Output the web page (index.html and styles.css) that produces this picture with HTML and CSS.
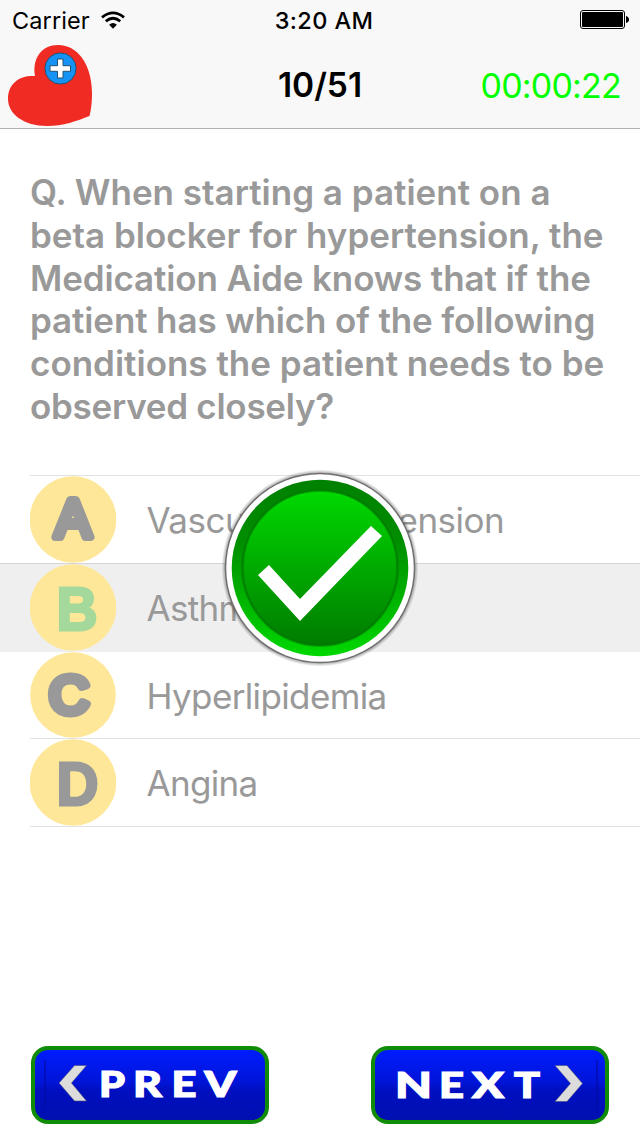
FILE: index.html
```html
<!DOCTYPE html>
<html lang="en">
<head>
<meta charset="utf-8">
<title>Quiz</title>
<link rel="stylesheet" href="styles.css">
</head>
<body>
<div class="screen">
  <header class="header">
    <div class="status">
      <div class="carrier"><span>Carrier</span>
        <svg class="wifi" viewBox="0 0 24 18" width="24" height="18"><g fill="none" stroke="#000" stroke-width="2.8"><path d="M1 6.3Q12-2.5 23 6.3"/><path d="M4.8 10.3Q12 4.2 19.2 10.3"/></g><path d="M8.1 13.7Q12 10.3 15.900 13.700L12 17.700Z"/></svg>
      </div>
      <div class="clock">3:20 AM</div>
      <svg class="battery" viewBox="0 0 50 20" width="50" height="20"><rect x=".5" y=".5" width="44" height="18" rx="2.500" fill="none" stroke="#000"/><rect x="2" y="2" width="41" height="15" rx="1"/><path d="M46 6q3 1 3 3.500t-3 3.500z"/></svg>
    </div>
    <div class="nav">
      <svg class="logo" viewBox="0 0 84 82" width="84" height="82"><path fill="#ef2b24" d="M27 31C24 13 34 0 50 0C70 0 84 20 84 48C84 58 83 65 81.500 71C69 76 55 81 39 81C16 81 0 69 0 54C0 38 12 30 27 31Z"/><circle cx="52.500" cy="23.500" r="15.600" fill="#1593f5" stroke="#24506f"/><path d="M49.500 14h5.500v6.700h7.500v5.600H55V33h-5.500v-6.700H42v-5.600h7.500z" fill="#fff" stroke="#24506f"/></svg>
      <div class="count">10/51</div>
      <div class="timer">00:00:22</div>
    </div>
  </header>
  <main class="content">
    <h1 class="question">
      <span class="l1">Q. When starting a patient on a</span>
      <span class="l2">beta blocker for hypertension, the</span>
      <span class="l3">Medication Aide knows that if the</span>
      <span class="l4">patient has which of the following</span>
      <span class="l5">conditions the patient needs to be</span>
      <span class="l6">observed closely?</span>
    </h1>
    <div class="answers">
      <div class="row row-a"><svg class="badge" viewBox="0 0 86 87"><circle cx="43" cy="43.500" r="43.300"/><text class="glyph" x="43" y="60.500">A</text></svg><span class="label la">Vascular hypertension</span></div>
      <div class="row row-b"><svg class="badge" viewBox="0 0 86 87"><circle cx="43" cy="43.500" r="43.300"/><text class="glyph flat green" x="26.500" y="65.500" textLength="41" lengthAdjust="spacingAndGlyphs">B</text></svg><span class="label lb">Asthma</span></div>
      <div class="row row-c"><svg class="badge" viewBox="0 0 86 87"><circle cx="43" cy="43.500" r="43.300"/><text class="glyph round-c" x="19" y="61.500" textLength="40" lengthAdjust="spacingAndGlyphs">C</text></svg><span class="label lc">Hyperlipidemia</span></div>
      <div class="row row-d"><svg class="badge" viewBox="0 0 86 87"><circle cx="43" cy="43.500" r="43.300"/><text class="glyph flat" x="26.500" y="65.500" textLength="42" lengthAdjust="spacingAndGlyphs">D</text></svg><span class="label ld">Angina</span></div>
    </div>
  </main>
  <footer class="footer">
    <div class="button"><svg viewBox="0 0 230 70" width="230" height="70"><path class="rule" d="M10 10v48"/><path class="arrow" d="M39.500 15.500h12L36.500 33l15 18h-12L24 33Z"/><g class="word"><text x="64" y="46.500" textLength="26" lengthAdjust="spacingAndGlyphs">P</text><text x="98" y="46.500" textLength="29" lengthAdjust="spacingAndGlyphs">R</text><text x="136.500" y="46.500" textLength="25" lengthAdjust="spacingAndGlyphs">E</text><text x="169.500" y="46.500" textLength="32" lengthAdjust="spacingAndGlyphs">V</text></g></svg></div>
    <div class="button"><svg viewBox="0 0 230 70" width="230" height="70"><path class="rule" d="M222 10v48"/><path class="arrow" d="M180 15.500h12L207.500 33.500L192 51.500h-12L195.500 33.500Z"/><g class="word"><text x="20" y="48" textLength="37" lengthAdjust="spacingAndGlyphs">N</text><text x="64" y="48" textLength="25" lengthAdjust="spacingAndGlyphs">E</text><text x="97" y="48" textLength="32" lengthAdjust="spacingAndGlyphs">X</text><text x="139" y="48" textLength="26" lengthAdjust="spacingAndGlyphs">T</text></g></svg></div>
  </footer>
  <svg class="correct" viewBox="0 0 200 200" width="200" height="200">
    <defs>
      <linearGradient id="rim" x2="0" y2="1"><stop stop-color="#008000"/><stop offset=".35" stop-color="#008e00"/><stop offset="1" stop-color="#00d800"/></linearGradient>
      <linearGradient id="face" x2="0" y2="1"><stop stop-color="#00d900"/><stop offset="1" stop-color="#007b00"/></linearGradient>
      <radialGradient id="shade"><stop offset=".94" stop-color="#000" stop-opacity=".5"/><stop offset="1" stop-color="#000" stop-opacity="0"/></radialGradient>
    </defs>
    <circle cx="100" cy="100" r="98.500" fill="url(#shade)"/>
    <circle cx="100" cy="100" r="94.500" fill="#fff" stroke="#707070" stroke-width="1.500"/>
    <circle cx="100" cy="100" r="88.300" fill="url(#rim)"/>
    <circle cx="100" cy="100" r="77.500" fill="url(#face)" stroke="#007000" stroke-opacity=".6" stroke-width="2.500"/>
    <path d="M38 107L49 97L80 131L151 58L162 68L80 153Z" fill="#fff"/>
  </svg>
</div>
</body>
</html>
```
FILE: styles.css
```css
* { box-sizing: border-box; }
body { margin: 0; font-family: Inter, "Liberation Sans", sans-serif; background: #fff; }
.screen { position: relative; width: 640px; height: 1136px; overflow: hidden; display: flex; flex-direction: column; }
.header { height: 129px; background: #f8f8f8; border-bottom: 1px solid #b2b2b2; }
.status { height: 40px; padding: 0 10px 0 12px; display: grid; grid-template-columns: 1fr auto 1fr; align-items: center; font-size: 23.5px; }
.carrier { display: flex; align-items: center; gap: 11px; letter-spacing: .1px; }
.clock { font-weight: 500; letter-spacing: .4px; padding-left: 6px; }
.battery { justify-self: end; }
.nav { height: 88px; padding: 5px 19px 0 8px; display: grid; grid-template-columns: 1fr auto 1fr; align-items: start; }
.count { font-size: 33.5px; line-height: 40px; padding: 20px 0 0 11px; font-weight: 600; letter-spacing: 0; }
.timer { font-size: 34px; line-height: 40px; padding-top: 21px; justify-self: end; color: #0f0; letter-spacing: -.8px; }
.content { flex: 1; color: #999; }
.question { margin: 0; padding: 42px 0 0 30px; font-size: 35px; font-weight: 600; line-height: 42.8px; height: 346px; }
.question span { display: block; white-space: nowrap; letter-spacing: 0; }
.question .l3, .question .l4 { letter-spacing: -.12px; }
.question .l6 { letter-spacing: -.27px; }
.row { display: flex; align-items: flex-start; margin-left: 30px; height: 88px; border-top: 1px solid #e2e2e2; }
.row-b { height: 89px; margin-left: 0; padding-left: 30px; background: #efefef; border-top-color: #d5d5d5; }
.row-c { height: 86px; border-top: 0; }
.row-d { height: 89px; border-bottom: 1px solid #e2e2e2; }
.badge { width: 86px; height: 87px; flex: none; }
.row-c .badge { height: 86px; }
.badge circle { fill: #ffe799; }
.glyph { font: 400 53px "Liberation Sans", sans-serif; text-anchor: middle; fill: #999; stroke: #999; stroke-width: 8px; stroke-linejoin: round; stroke-linecap: round; }
.round-c { font-size: 52px; text-anchor: start; }
.flat { font: 700 62px "Liberation Sans", sans-serif; text-anchor: start; stroke-width: 3px; stroke-linejoin: miter; }
.green { fill: #a5d99b; stroke: #a5d99b; }
.label { padding-left: 30.5px; font-size: 35px; line-height: 88px; letter-spacing: -.7px; white-space: nowrap; }
.la { letter-spacing: -.52px; }
.lc { letter-spacing: -.63px; }
.footer { display: flex; justify-content: space-between; padding: 0 31px 12px 31px; }
.button { width: 238px; height: 78px; border: 4px solid #118c08; border-radius: 17px; background: linear-gradient(#001cff, #0014d5 48%, #000fc0 56%, #0010b0); }
.rule { stroke: #000b98; stroke-width: 1px; }
.arrow { fill: #dcdcdc; stroke: #465078; stroke-opacity: .6; stroke-width: 1px; }
.word { font: 900 36px Lato, sans-serif; fill: #fff; stroke: #fff; stroke-width: 1.2px; }
.correct { position: absolute; left: 220px; top: 468px; }
```
